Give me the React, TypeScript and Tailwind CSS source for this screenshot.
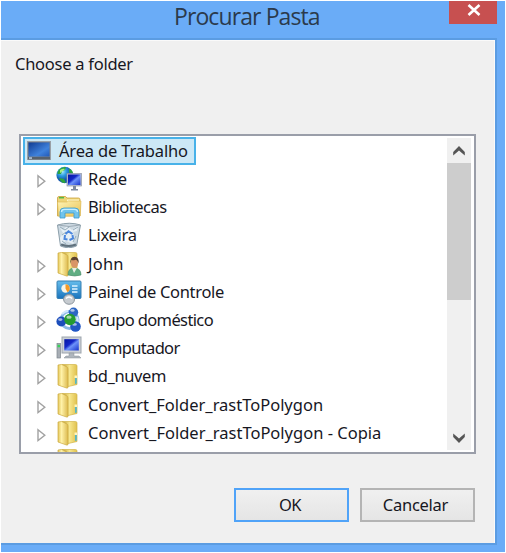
import React from 'react';

const Desktop = () => (
  <svg width="24" height="20" viewBox="0 0 24 20" className="block">
    <defs>
      <linearGradient id="desk" x1="0" y1="0" x2="1" y2="1">
        <stop offset="0" stopColor="#103b92" /><stop offset=".65" stopColor="#3f82dc" /><stop offset="1" stopColor="#2159b8" />
      </linearGradient>
    </defs>
    <rect x=".5" y=".5" width="23" height="18" fill="#77808a" stroke="#9aa0a6" />
    <rect x="1.5" y="1.5" width="21" height="14" fill="url(#desk)" />
    <rect x="1" y="16" width="22" height="2.5" fill="#57616c" />
    <rect x="2" y="16.3" width="3" height="1.5" fill="#b6cbe2" />
  </svg>
);

const Network = () => (
  <>
    <defs>
      <radialGradient id="globe" cx=".35" cy=".3"><stop offset="0" stopColor="#a9e9ff" /><stop offset=".5" stopColor="#2c9de0" /><stop offset="1" stopColor="#1458ad" /></radialGradient>
      <linearGradient id="scr" x1="0" y1="0" x2="1" y2="1"><stop offset="0" stopColor="#0616a0" /><stop offset=".4" stopColor="#1427c8" /><stop offset=".55" stopColor="#6d93fa" /><stop offset="1" stopColor="#1733cc" /></linearGradient>
    </defs>
    <circle cx="8.7" cy="9" r="8.3" fill="url(#globe)" />
    <path d="M3 3.6Q6 .5 10 1L9 4 6 5 5 8 1.5 8Q1.5 5.5 3 3.6ZM3 12l5 1 2 3.5-3 .5Q4 15 3 12M13 2.5q4 2 4 5l-4-1Z" fill="#2fa53b" />
    <path d="M4 4q3-2 5-1L7 5 4 7Z" fill="#a6ec83" />
    <rect x="11" y="7.5" width="14.5" height="12.5" fill="#bcc4d4" stroke="#8992a6" strokeWidth=".7" />
    <rect x="12" y="8.5" width="12.5" height="10.5" fill="url(#scr)" />
    <path d="M17 20h3v3h2v1.6h-7V23h2Z" fill="#7d899f" />
  </>
);

const Libraries = () => (
  <>
    <defs><linearGradient id="lib" x1="0" y1="0" x2="1" y2="1"><stop offset="0" stopColor="#fff4b6" /><stop offset="1" stopColor="#e9c153" /></linearGradient></defs>
    <path d="M1.5 4q0-1.5 1.5-1.5h6.5L11 4h11.5Q24 4 24 5.5V22H1.5Z" fill="#efd579" stroke="#c9a13c" strokeWidth=".8" />
    <path d="M11 5.5h12V8H11Z" fill="#fff6c7" />
    <path d="M3 3.7h5" stroke="#54b944" strokeWidth="1.5" />
    <path d="M1.5 8h9.5l1.5-1H25l-.8 15H2.5Z" fill="url(#lib)" stroke="#dcb750" strokeWidth=".6" />
    <path d="M4 24v-6q0-4 4-4h11q4 0 4 4v6h-5v-5H9v5Z" fill="#70c4ed" stroke="#3a9acd" strokeWidth=".8" />
    <path d="M5.5 18q0-2.6 3-2.6h10q3 0 3 2.6" fill="none" stroke="#c7efff" strokeWidth="1.4" />
  </>
);

const Bin = () => (
  <>
    <path d="M1.5 3 4.5 24q8 3.5 16 0L24.5 3q-11-3.5-23 0Z" fill="#ccd9e2" stroke="#8c9faa" strokeWidth="1" />
    <path d="m3 4 4 4 4-4 5 4 6-4-1 5-4 1 2 6-2 6-7-3-5 3L4 16l3-5Z" fill="#e7eff5" />
    <path d="m4 5 5 3 4-3m4 3 5-3M6 13l4-3m7 10 3-6M6 19l4 3" stroke="#96adba" strokeWidth="1" fill="none" />
    <path d="m9.5 12 3-2.7 4 2.7M16.5 13l.5 3.5-3.5 1.5M11.5 17.5 8.5 17l.5-4" fill="none" stroke="#4b86dd" strokeWidth="2" />
    <path d="M5 22.5q8 3 15 0" fill="none" stroke="#60717d" strokeWidth="2" />
    <path d="M2 3q11 3 22 0" fill="none" stroke="#9caab5" />
  </>
);

const FolderShape = () => (
  <>
    <defs>
      <linearGradient id="fold" x1="0" y1="0" x2="1" y2="0"><stop offset="0" stopColor="#e4c75b" /><stop offset=".35" stopColor="#fff2a9" /><stop offset="1" stopColor="#dcba4e" /></linearGradient>
      <linearGradient id="foldr" x1="0" y1="0" x2="1" y2="0"><stop offset="0" stopColor="#bd982c" /><stop offset=".5" stopColor="#f7e78d" /><stop offset="1" stopColor="#e0c14e" /></linearGradient>
    </defs>
    <path d="M6 1.5h13.5q1.5 0 1.5 1.5v18.5L10 24Z" fill="url(#foldr)" stroke="#d1b449" strokeWidth=".7" />
    <path d="M2 2q4-1 5 0l4 2q1 .5 1 2v18q0 1.5-1.5 1L2 22Z" fill="url(#fold)" stroke="#cbaa40" strokeWidth=".7" />
  </>
);

const Folder = () => (
  <>
    <FolderShape />
    <path d="M19 15h1.8v5.5l-1.8.5Z" fill="#55b7c7" />
    <path d="M18.5 12.5h2.5V15h-2.5Z" fill="#fff4bd" />
  </>
);

const User = () => (
  <>
    <FolderShape />
    <path d="M12 24q0-7 6-7 7 0 7 7-6 2-13 0Z" fill="#60ae83" stroke="#478a67" strokeWidth=".6" />
    <path d="m16 17 2 5 3-5Z" fill="#e7eee4" />
    <ellipse cx="18.5" cy="12.2" rx="3.5" ry="4.6" fill="#d99568" />
    <path d="M14.5 13q-1-7 4-7.3 5 .3 4 7-1-4-3-4-3 1-4 0Z" fill="#594130" />
  </>
);

const Control = () => (
  <>
    <defs><linearGradient id="cp" x1="0" y1="0" x2="0" y2="1"><stop offset="0" stopColor="#66bdec" /><stop offset="1" stopColor="#1973bd" /></linearGradient></defs>
    <rect x="1" y="2" width="24" height="17.5" rx="1" fill="url(#cp)" stroke="#3980b2" />
    <circle cx="9.5" cy="9.5" r="4.2" fill="#f8f5e7" />
    <path d="M9.5 9.5V5.3A4.2 4.2 0 0 1 11.5 13.2Z" fill="#f59a25" />
    <path d="M16 7h5.5M16 10h5.5M16 13h5.5" stroke="#dff4ff" strokeWidth="1.5" />
    <path d="M7.5 20q1-4.5 5.5-4.5T18.5 20q0 5-5.5 5.3Q8 25 7.5 20Z" fill="#c6cbd0" stroke="#8b949c" />
    <path d="M10 19.5q3-3 6 0" fill="none" stroke="#fff" strokeWidth="1.5" />
  </>
);

const Ball = ({ x, y, r, fill }: { x: number; y: number; r: number; fill: string }) => (
  <><circle cx={x} cy={y} r={r} fill={fill} /><ellipse cx={x - 1} cy={y - r * 0.4} rx={r * 0.45} ry={r * 0.28} fill="#fff" opacity=".6" /></>
);

const Homegroup = () => (
  <>
    <circle cx="13.5" cy="13" r="8.5" fill="none" stroke="#8ab7e6" strokeWidth="3" />
    <path d="M6 7q3-3 6-3m9 6q2 5-1 8" fill="none" stroke="#d2e8ff" strokeWidth="2" />
    <Ball x={17.5} y={5.3} r={4.7} fill="#2c66c4" />
    <Ball x={5.3} y={14.5} r={4.9} fill="#1b4dbb" />
    <Ball x={19.5} y={19.5} r={5.3} fill="#2157c4" />
    <Ball x={14} y={12.5} r={5.8} fill="#249c31" />
  </>
);

const Computer = () => (
  <>
    <rect x="1" y="8.5" width="3.5" height="14.5" fill="#a8aeb5" stroke="#7d858c" strokeWidth=".7" />
    <path d="M1.5 11h2.5" stroke="#39d25b" strokeWidth="2.5" />
    <rect x="6" y="2" width="19" height="16" fill="#cbd0d6" stroke="#9da5ad" />
    <rect x="8.3" y="4.2" width="14.5" height="11.3" fill="url(#scr)" />
    <path d="M13 18h5v3h5l2 2H8l2-2h3Z" fill="#aeb5bc" stroke="#899199" strokeWidth=".5" />
  </>
);

const Chevron = ({ down = false }: { down?: boolean }) => (
  <svg width="14" height="12" viewBox="0 0 14 12" className={down ? 'block rotate-180' : 'block'}>
    <path d="M1.2 10.5V7L7 1l5.8 6v3.5L7 5.6Z" fill="#555" />
  </svg>
);

const rows = [
  { label: 'Rede', icon: <Network />, track: 'tracking-[0px]' },
  { label: 'Bibliotecas', icon: <Libraries />, track: 'tracking-[-0.48px]' },
  { label: 'Lixeira', icon: <Bin />, track: 'tracking-[-0.25px]', leaf: true },
  { label: 'John', icon: <User />, track: 'tracking-[0.2px]' },
  { label: 'Painel de Controle', icon: <Control />, track: 'tracking-[-0.33px]' },
  { label: 'Grupo doméstico', icon: <Homegroup />, track: 'tracking-[-0.62px]' },
  { label: 'Computador', icon: <Computer />, track: 'tracking-[-0.68px]' },
  { label: 'bd_nuvem', icon: <Folder />, track: 'tracking-[-0.38px]' },
  { label: 'Convert_Folder_rastToPolygon', icon: <Folder />, track: 'tracking-[-0.01px]' },
  { label: 'Convert_Folder_rastToPolygon - Copia', icon: <Folder />, track: 'tracking-[0px]' },
  { label: '', icon: <Folder />, track: '', leaf: true },
];

export default function App() {
  return (
    <div className="h-[553px] w-[506px] overflow-hidden bg-white p-px font-['Noto_Sans',sans-serif] text-[16.5px] text-[#17171f]">
      <div className="flex h-[551px] w-[504px] flex-col bg-[#6aacf7]">
        <header className="flex h-[37px] shrink-0 items-start">
          <div className="w-[448px] pl-[173px] font-['Open_Sans',sans-serif] text-[23px] leading-[30px] tracking-[-0.9px] text-[#2b3a4c]">
            <span className="whitespace-nowrap">Procurar Pasta</span>
          </div>
          <button className="flex h-[23px] w-[48px] items-start justify-center bg-[#c75050] pl-[2px] pt-[3px]">
            <svg width="14" height="12" viewBox="0 0 14 12"><path d="m1.5 1 11 10m0-10-11 10" stroke="white" strokeWidth="2.6" /></svg>
          </button>
        </header>
        <main className="flex h-[507px] w-[496px] flex-col border-t-2 border-r-2 border-b-2 border-[#5b9ce2] bg-[#f0f0f0] shadow-[inset_-1px_1px_0_#fafafa]">
          <div className="h-[94px] shrink-0 pl-[14px] pt-[12px] leading-[24px]">
            <span className="whitespace-nowrap tracking-[-0.26px]">Choose a folder</span>
          </div>
          <div className="ml-[18px] flex h-[320px] w-[457px] shrink-0 justify-between overflow-hidden border-2 border-[#9a9ea9] bg-white">
            <div className="w-[420px] overflow-hidden pl-[2px] pt-[1px]">
              <div className="flex h-[28px] w-[173px] items-center border-2 border-[#48b2e9] bg-[#cce8f6] pl-[2px]">
                <Desktop />
                <span className="ml-[8px] whitespace-nowrap leading-[24px] tracking-[-0.17px]">Área de Trabalho</span>
              </div>
              {rows.map((row, i) => (
                <div key={i} className="flex h-[28.2px] items-center pl-[13px]">
                  <svg width="11" height="14" viewBox="0 0 11 14" className="mt-[4px] shrink-0">
                    {!row.leaf && <path d="m2 1.8 6.8 5.4L2 12.5Z" fill="white" stroke="#a2a2a2" strokeWidth="1.4" />}
                  </svg>
                  <svg width="26" height="26" viewBox="0 0 26 26" className="ml-[9px] shrink-0">{row.icon}</svg>
                  <span className={'ml-[6px] whitespace-nowrap leading-[24px] ' + row.track}>{row.label}</span>
                </div>
              ))}
            </div>
            <div className="mr-[3px] mt-[2px] flex h-[312px] w-[24px] flex-col items-center bg-[#f0f0f0]">
              <div className="flex h-[25px] items-center"><Chevron /></div>
              <div className="h-[137px] w-full bg-[#cdcdcd]" />
              <div className="mt-auto flex h-[25px] items-center"><Chevron down /></div>
            </div>
          </div>
          <footer className="mt-[34px] flex h-[34px] shrink-0 justify-end gap-[11px] pr-[20px]">
            <button className="w-[115px] border-2 border-[#50a3f8] bg-gradient-to-b from-[#f0f0f0] to-[#e5e5e5] pr-[3px] tracking-[-0.5px]">OK</button>
            <button className="w-[115px] border-2 border-[#b4b4b4] bg-gradient-to-b from-[#f0f0f0] to-[#e5e5e5] pr-[4px] tracking-[-0.26px]">Cancelar</button>
          </footer>
        </main>
      </div>
    </div>
  );
}
